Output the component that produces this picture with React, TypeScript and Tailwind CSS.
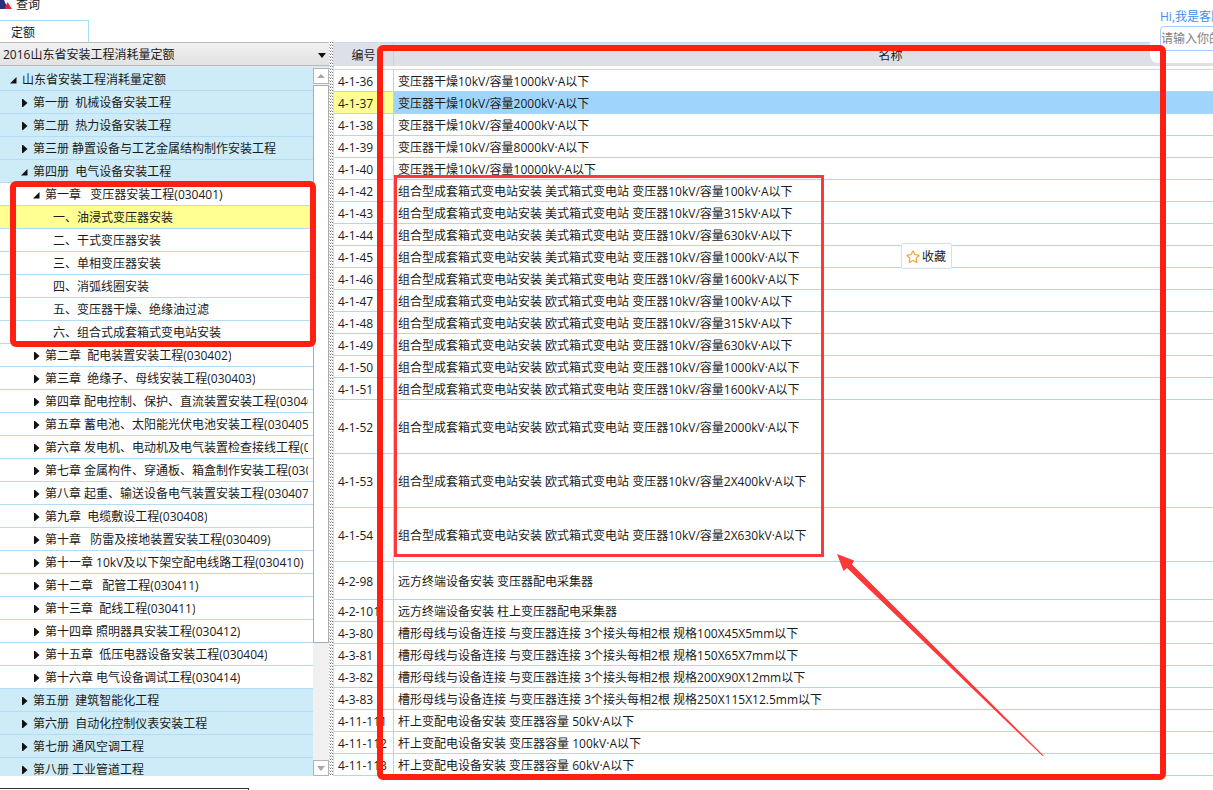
import { ChangeEvent, useState } from "react";
import { Star } from "lucide-react";
import clsx from "clsx";

type TreeItem = {
  label: string;
  level: number;
  open?: boolean;
  selected?: boolean;
};

const tree: TreeItem[] = [
  { label: "山东省安装工程消耗量定额", level: 0, open: true },
  { label: "第一册  机械设备安装工程", level: 1 },
  { label: "第二册  热力设备安装工程", level: 1 },
  { label: "第三册 静置设备与工艺金属结构制作安装工程", level: 1 },
  { label: "第四册  电气设备安装工程", level: 1, open: true },
  { label: "第一章   变压器安装工程(030401)", level: 2, open: true },
  { label: "一、油浸式变压器安装", level: 3, selected: true },
  { label: "二、干式变压器安装", level: 3 },
  { label: "三、单相变压器安装", level: 3 },
  { label: "四、消弧线圈安装", level: 3 },
  { label: "五、变压器干燥、绝缘油过滤", level: 3 },
  { label: "六、组合式成套箱式变电站安装", level: 3 },
  { label: "第二章  配电装置安装工程(030402)", level: 2 },
  { label: "第三章  绝缘子、母线安装工程(030403)", level: 2 },
  { label: "第四章 配电控制、保护、直流装置安装工程(030404)", level: 2 },
  { label: "第五章 蓄电池、太阳能光伏电池安装工程(030405)", level: 2 },
  { label: "第六章 发电机、电动机及电气装置检查接线工程(030406)", level: 2 },
  { label: "第七章 金属构件、穿通板、箱盒制作安装工程(030407)", level: 2 },
  { label: "第八章 起重、输送设备电气装置安装工程(030407)", level: 2 },
  { label: "第九章  电缆敷设工程(030408)", level: 2 },
  { label: "第十章   防雷及接地装置安装工程(030409)", level: 2 },
  { label: "第十一章 10kV及以下架空配电线路工程(030410)", level: 2 },
  { label: "第十二章   配管工程(030411)", level: 2 },
  { label: "第十三章  配线工程(030411)", level: 2 },
  { label: "第十四章 照明器具安装工程(030412)", level: 2 },
  { label: "第十五章  低压电器设备安装工程(030404)", level: 2 },
  { label: "第十六章 电气设备调试工程(030414)", level: 2 },
  { label: "第五册  建筑智能化工程", level: 1 },
  { label: "第六册  自动化控制仪表安装工程", level: 1 },
  { label: "第七册 通风空调工程", level: 1 },
  { label: "第八册 工业管道工程", level: 1 },
];

const indents = ["pl-2", "pl-[19px]", "pl-[31px]", "pl-[53px]"];

type Row = { code: string; name: string; height?: string };

const rows: Row[] = [
  { code: "4-1-36", name: "变压器干燥10kV/容量1000kV·A以下" },
  { code: "4-1-37", name: "变压器干燥10kV/容量2000kV·A以下" },
  { code: "4-1-38", name: "变压器干燥10kV/容量4000kV·A以下" },
  { code: "4-1-39", name: "变压器干燥10kV/容量8000kV·A以下" },
  { code: "4-1-40", name: "变压器干燥10kV/容量10000kV·A以下" },
  { code: "4-1-42", name: "组合型成套箱式变电站安装 美式箱式变电站 变压器10kV/容量100kV·A以下" },
  { code: "4-1-43", name: "组合型成套箱式变电站安装 美式箱式变电站 变压器10kV/容量315kV·A以下" },
  { code: "4-1-44", name: "组合型成套箱式变电站安装 美式箱式变电站 变压器10kV/容量630kV·A以下" },
  { code: "4-1-45", name: "组合型成套箱式变电站安装 美式箱式变电站 变压器10kV/容量1000kV·A以下" },
  { code: "4-1-46", name: "组合型成套箱式变电站安装 美式箱式变电站 变压器10kV/容量1600kV·A以下" },
  { code: "4-1-47", name: "组合型成套箱式变电站安装 欧式箱式变电站 变压器10kV/容量100kV·A以下" },
  { code: "4-1-48", name: "组合型成套箱式变电站安装 欧式箱式变电站 变压器10kV/容量315kV·A以下" },
  { code: "4-1-49", name: "组合型成套箱式变电站安装 欧式箱式变电站 变压器10kV/容量630kV·A以下" },
  { code: "4-1-50", name: "组合型成套箱式变电站安装 欧式箱式变电站 变压器10kV/容量1000kV·A以下" },
  { code: "4-1-51", name: "组合型成套箱式变电站安装 欧式箱式变电站 变压器10kV/容量1600kV·A以下" },
  { code: "4-1-52", name: "组合型成套箱式变电站安装 欧式箱式变电站 变压器10kV/容量2000kV·A以下", height: "h-[54px]" },
  { code: "4-1-53", name: "组合型成套箱式变电站安装 欧式箱式变电站 变压器10kV/容量2X400kV·A以下", height: "h-[54px]" },
  { code: "4-1-54", name: "组合型成套箱式变电站安装 欧式箱式变电站 变压器10kV/容量2X630kV·A以下", height: "h-[54px]" },
  { code: "4-2-98", name: "远方终端设备安装 变压器配电采集器", height: "h-[38px]" },
  { code: "4-2-101", name: "远方终端设备安装 柱上变压器配电采集器" },
  { code: "4-3-80", name: "槽形母线与设备连接 与变压器连接 3个接头每相2根 规格100X45X5mm以下" },
  { code: "4-3-81", name: "槽形母线与设备连接 与变压器连接 3个接头每相2根 规格150X65X7mm以下" },
  { code: "4-3-82", name: "槽形母线与设备连接 与变压器连接 3个接头每相2根 规格200X90X12mm以下" },
  { code: "4-3-83", name: "槽形母线与设备连接 与变压器连接 3个接头每相2根 规格250X115X12.5mm以下" },
  { code: "4-11-111", name: "杆上变配电设备安装 变压器容量 50kV·A以下" },
  { code: "4-11-112", name: "杆上变配电设备安装 变压器容量 100kV·A以下" },
  { code: "4-11-113", name: "杆上变配电设备安装 变压器容量 60kV·A以下" },
];

function TreeArrow({ open }: { open?: boolean }) {
  return (
    <svg width="10" height="10" viewBox="0 0 10 10" className="shrink-0" aria-hidden="true">
      {open ? <path d="M8.500 2v6.500H2z" fill="#111" /> : <path d="M3 1h1l4.500 4L4 9H3z" fill="#111" />}
    </svg>
  );
}

function Tree() {
  return (
    <ul className="min-w-0 flex-1 overflow-hidden">
      {tree.map((item) => (
        <li
          key={item.label}
          className={clsx(
            "h-[23px] border-b border-[#b3dcf6]",
            item.selected ? "bg-[#ffff92]" : item.level < 2 ? "bg-[#cdecf8]" : "bg-white",
          )}
        >
          <button
            type="button"
            className={clsx("flex h-full w-full items-center gap-1 pt-0.5 pr-[5px] text-left", indents[item.level])}
          >
            {item.level < 3 && <TreeArrow open={item.open} />}
            <span className="min-w-0 overflow-hidden whitespace-pre">{item.label}</span>
          </button>
        </li>
      ))}
    </ul>
  );
}

function Scrollbar() {
  return (
    <div className="flex w-4 shrink-0 flex-col gap-px bg-[#f0f0f0]">
      <button
        type="button"
        aria-label="向上滚动"
        className="flex h-4 items-center justify-center border border-[#b4b4b4] bg-white"
      >
        <svg width="8" height="5" viewBox="0 0 8 5">
          <path d="M4 0l4 4H0z" fill="#a8a8a8" />
        </svg>
      </button>
      <div className="grow-[558] basis-0 border border-[#acacac] bg-white" />
      <div className="grow-[115] basis-0" />
      <button
        type="button"
        aria-label="向下滚动"
        className="flex h-4 items-center justify-center border border-[#b4b4b4] bg-white"
      >
        <svg width="8" height="5" viewBox="0 0 8 5">
          <path d="M0 0h8L4 5z" fill="#a8a8a8" />
        </svg>
      </button>
    </div>
  );
}

function Sidebar() {
  return (
    <aside className="flex w-[329px] shrink-0 flex-col">
      <div className="relative border-y border-[#b9b9b9] bg-linear-to-b from-[#f1f1f1] to-[#e2e2e2]">
        <select
          aria-label="定额库"
          className="block h-[22px] w-full appearance-none bg-transparent pt-0.5 pl-[3px] outline-none"
        >
          <option>2016山东省安装工程消耗量定额</option>
        </select>
        <svg
          width="8"
          height="5"
          viewBox="0 0 8 5"
          className="pointer-events-none absolute top-2.5 right-[3px]"
          aria-hidden="true"
        >
          <path d="M0 0h8L4 5z" fill="#111" />
        </svg>
      </div>
      <div className="flex min-h-0 grow basis-0 overflow-hidden border-t-2 border-[#dcebf3]">
        <Tree />
        <Scrollbar />
      </div>
    </aside>
  );
}

function QuotaTable() {
  const [selected, setSelected] = useState("4-1-37");

  return (
    <table className="w-full min-w-[1053px] table-fixed border-separate border-spacing-0">
      <colgroup>
        <col className="w-[60px]" />
        <col />
      </colgroup>
      <thead>
        <tr>
          <th className="p-0 pb-1 font-normal shadow-[inset_0_-1px_#b5def7]">
            <div className="h-6 border-t border-r border-t-[#c6dcec] border-r-[#c3d3e2] bg-[#dde0e6] pt-px leading-6">
              编号
            </div>
          </th>
          <th className="p-0 pb-1 font-normal shadow-[inset_0_-1px_#b5def7]">
            <div className="h-6 border-t border-t-[#c6dcec] bg-[#dde0e6] pt-px leading-6">名称</div>
          </th>
        </tr>
      </thead>
      <tbody>
        {rows.map((row) => {
          const active = row.code === selected;
          return (
            <tr key={row.code} onClick={() => setSelected(row.code)}>
              <td
                className={clsx(
                  "p-0 pt-px pl-1 whitespace-nowrap shadow-[inset_-1px_-1px_#a8d9f7]",
                  row.height ?? "h-[22px]",
                  active && "bg-[#ffff92]",
                )}
              >
                {row.code}
              </td>
              <td
                className={clsx(
                  "p-0 pt-px pl-1 whitespace-nowrap shadow-[inset_0_-1px_#a8d9f7]",
                  active && "bg-[#9fd5fd]",
                )}
              >
                {row.name}
              </td>
            </tr>
          );
        })}
      </tbody>
    </table>
  );
}

function ChatWidget() {
  const [text, setText] = useState("");

  return (
    <div className="absolute top-0 right-0 w-[63px] overflow-hidden rounded-bl-lg bg-white pt-2 pb-3 pl-2.5">
      <label htmlFor="ask" className="block w-40 leading-[18px] text-[#3d8ff2]">
        Hi,我是客服
      </label>
      <input
        id="ask"
        value={text}
        onChange={(e: ChangeEvent<HTMLInputElement>) => setText(e.target.value)}
        placeholder="请输入你的问题"
        className="block h-[25px] w-40 rounded-sm border border-[#a9cbf7] bg-white outline-none placeholder:text-[#808080]"
      />
    </div>
  );
}

// red pen marks drawn over the window
function Marks() {
  return (
    <div className="pointer-events-none">
      <div className="absolute top-[181px] left-2.5 h-[166px] w-[306px] rounded-md border-6 border-[#ff2012]" />
      <div className="absolute top-[45px] left-[377px] h-[735px] w-[789px] rounded-md border-6 border-[#ff2012]" />
      <div className="absolute top-[175px] left-[394px] h-[382px] w-[430px] border-3 border-[#fd3838]" />
      <svg
        width="208"
        height="204"
        viewBox="0 0 208 204"
        className="absolute top-[554px] left-[837px]"
        aria-hidden="true"
      >
        <path d="M0 0L17 6.500L15 10.500L206.500 201.500L205.500 202L10 14L6.500 17z" fill="#fd3838" />
      </svg>
    </div>
  );
}

export default function App() {
  return (
    <div className="relative flex min-h-screen flex-col overflow-hidden bg-white font-['Open_Sans','Noto_Sans_CJK_SC',sans-serif] text-xs text-[#1a1a1a]">
      <header className="flex h-5 items-start gap-1">
        <svg width="12" height="10" viewBox="0 0 12 10" aria-hidden="true">
          <path d="M0 0h4l4 9H0z" fill="#27317f" />
          <path d="M7.500 2L12 9H4.500z" fill="#e0263c" />
        </svg>
        <h1 className="leading-2.5">查询</h1>
      </header>
      <nav className="flex">
        <button
          type="button"
          className="h-[22px] w-[89px] border-t border-r border-[#a8dcf7] pt-0.5 pl-[11px] text-left"
        >
          定额
        </button>
      </nav>
      <main className="flex">
        <Sidebar />
        <div className="w-[5px] shrink-0 border-r border-[#d5dde3] bg-[conic-gradient(#777_25%,#fff_0_50%,#bbb_0_75%,#fff_0)] bg-[length:2px_3px]" />
        <div className="min-w-0 flex-1 overflow-hidden">
          <QuotaTable />
        </div>
      </main>
      <div className="mt-3 min-h-0.5 w-[249px] flex-1 border-t border-r border-[#333]" />

      <ChatWidget />
      <button
        type="button"
        className="absolute top-[243px] left-[901px] flex h-[26px] w-[51px] items-center gap-0.5 rounded-xs border border-[#dcdfe2] bg-white/90 pt-0.5 pl-1"
      >
        <Star size={14} color="#f5a12d" strokeWidth={2} />
        收藏
      </button>
      <Marks />
    </div>
  );
}
